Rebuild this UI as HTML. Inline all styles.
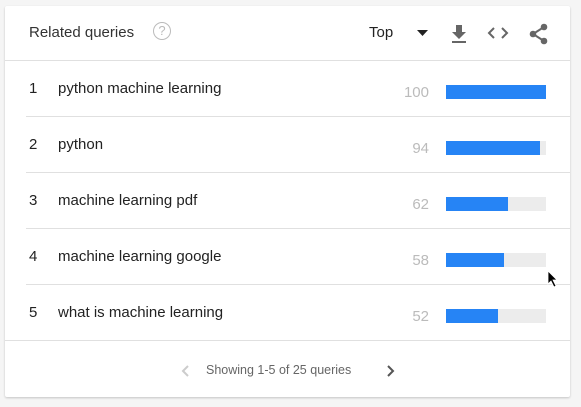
<!DOCTYPE html><html><head><style>
body{margin:0;width:581px;height:407px;background:#f5f5f5;font-family:"Liberation Sans",Arial,sans-serif;position:relative;overflow:hidden}
.card{position:absolute;left:5px;top:6px;width:565px;height:391px;background:#fff;box-shadow:0 1px 2px rgba(0,0,0,.2);border-radius:2px}
.hdr{position:absolute;left:0;top:0;width:565px;height:54px;border-bottom:1px solid #e0e0e0}
.t{position:absolute;left:24px;top:18px;font-size:15px;color:#333}
.q{position:absolute;left:148px;top:16px;width:16px;height:16px;border:1.5px solid #bbb;border-radius:50%;color:#bbb;font-size:13px;text-align:center;line-height:16px}
.top{position:absolute;left:364px;top:18px;font-size:15px;color:#222}
.row{position:absolute;left:0;width:565px;height:56px}
.row .line{position:absolute;left:21px;right:0;bottom:0;border-bottom:1px solid #e0e0e0}
.n{position:absolute;left:24px;top:19px;font-size:15px;color:#222}
.s{position:absolute;left:53px;top:19px;font-size:15px;color:#222}
.v{position:absolute;right:141px;top:23px;font-size:15px;color:#bbb}
.bg{position:absolute;left:441px;top:24px;width:100px;height:14px;background:#ececec}
.bar{height:14px;background:#2684f5}
.f{position:absolute;top:357px;left:201px;font-size:12.5px;color:#666}
</style></head><body>
<div class="card">
<div class="hdr"><div class="t">Related queries</div><div class="q">?</div><div class="top">Top</div>
<svg style="position:absolute;left:412px;top:24px" width="12" height="7"><path d="M0 0H11L5.5 6Z" fill="#222"/></svg>
<svg style="position:absolute;left:445px;top:18px" width="18" height="20"><path d="M6 1h6v7h4l-7 7-7-7h4z" fill="#666"/><rect x="2" y="17" width="14" height="2" fill="#666"/></svg>
<svg style="position:absolute;left:482px;top:20px" width="22" height="14"><path d="M7 2L2 7l5 5M15 2l5 5-5 5" stroke="#666" stroke-width="2" fill="none"/></svg>
<svg style="position:absolute;left:523px;top:17px" width="22" height="22"><path d="M16 4L5 11l11 7" stroke="#666" stroke-width="2" fill="none"/><circle cx="16" cy="4" r="3.3" fill="#666"/><circle cx="5" cy="11" r="3.3" fill="#666"/><circle cx="16" cy="18" r="3.3" fill="#666"/></svg>
</div>
<div class="row" style="top:55px"><div class="n">1</div><div class="s">python machine learning</div><div class="v">100</div><div class="bg"><div class="bar" style="width:100px"></div></div><div class="line"></div></div>
<div class="row" style="top:111px"><div class="n">2</div><div class="s">python</div><div class="v">94</div><div class="bg"><div class="bar" style="width:94px"></div></div><div class="line"></div></div>
<div class="row" style="top:167px"><div class="n">3</div><div class="s">machine learning pdf</div><div class="v">62</div><div class="bg"><div class="bar" style="width:62px"></div></div><div class="line"></div></div>
<div class="row" style="top:223px"><div class="n">4</div><div class="s">machine learning google</div><div class="v">58</div><div class="bg"><div class="bar" style="width:58px"></div></div><div class="line"></div></div>
<div class="row" style="top:279px"><div class="n">5</div><div class="s">what is machine learning</div><div class="v">52</div><div class="bg"><div class="bar" style="width:52px"></div></div><div class="line" style="left:0"></div></div>
<svg style="position:absolute;left:176px;top:358px" width="10" height="14"><path d="M7 2L2 7l5 5" stroke="#ccc" stroke-width="2" fill="none"/></svg>
<div class="f">Showing 1-5 of 25 queries</div>
<svg style="position:absolute;left:380px;top:358px" width="10" height="14"><path d="M3 2l5 5-5 5" stroke="#555" stroke-width="2" fill="none"/></svg>
</div>
<svg style="position:absolute;left:547px;top:270px" width="12" height="18"><path d="M1 1v13l3-3 3 6 2-1-3-6h4z" fill="#000" stroke="#fff" stroke-width="0.8"/></svg>
</body></html>
